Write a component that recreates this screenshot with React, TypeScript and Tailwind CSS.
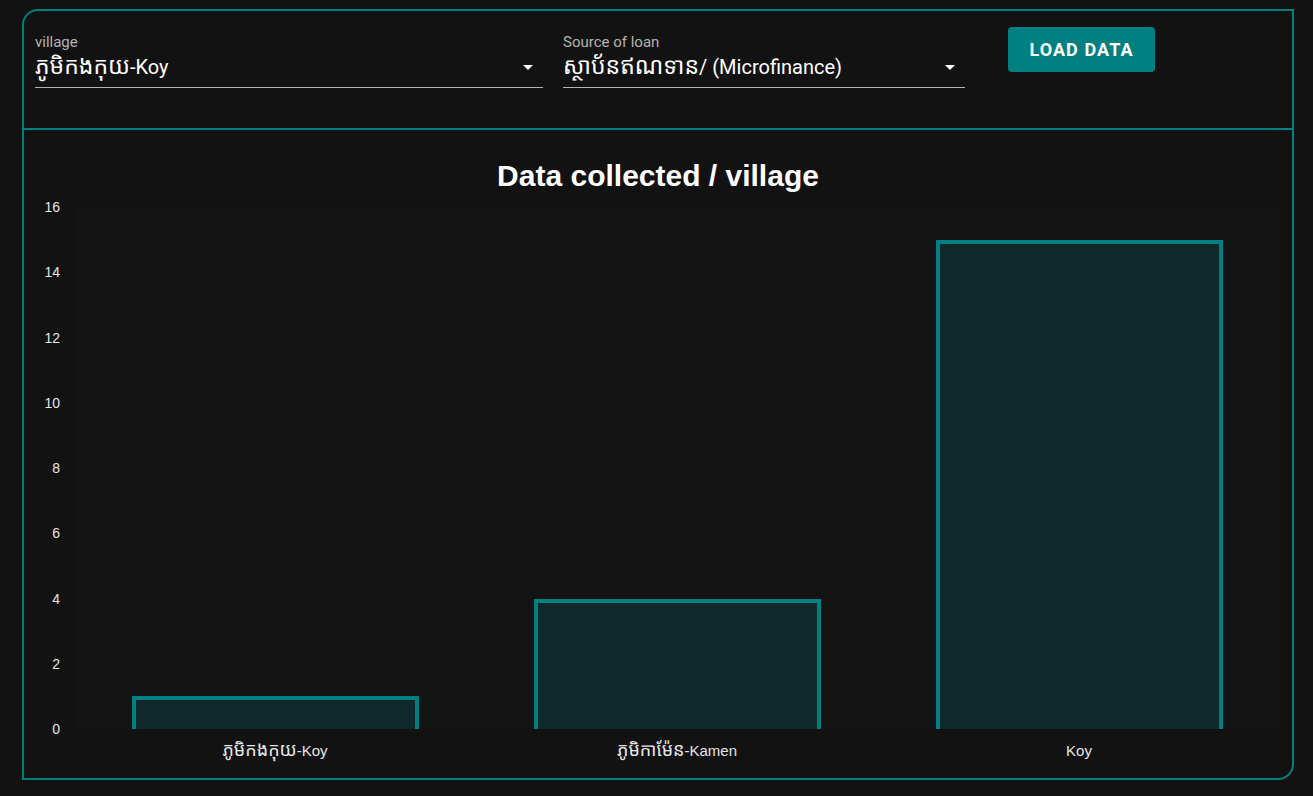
import React from "react";

interface Village {
  khmer: string;
  latin: string;
  count: number;
}

const villages: Village[] = [
  { khmer: "ភូមិកងកុយ", latin: "-Koy", count: 1 },
  { khmer: "ភូមិកាម៉ែន", latin: "-Kamen", count: 4 },
  { khmer: "", latin: "Koy", count: 15 },
];

const ticks = [16, 14, 12, 10, 8, 6, 4, 2, 0];
const PLOT_H = 522;
const MAX = 16;

const uiFont = "font-['Roboto','Noto_Sans_Khmer','Khmer_OS','Noto_Sans',sans-serif]";
const chartFont = "font-['Liberation_Sans','Noto_Sans_Khmer','Khmer_OS',Arial,sans-serif]";

function SelectField({ label, khmer, latin, width }: { label: string; khmer: string; latin: string; width: string }) {
  return (
    <div className={`${width} mt-[6px] ${uiFont}`}>
      <p className="text-[15px] leading-[18px] text-[#b3b3b3]">{label}</p>
      <div className="mt-[4px] flex items-center justify-between border-b border-[#b3b3b3] pb-[8px]">
        <span className="text-[20px] leading-[24px] text-white">
          <span className="text-[23px]">{khmer}</span>
          {latin}
        </span>
        {/* flecha desplegable */}
        <svg width="10" height="5" viewBox="0 0 10 5" className="mr-[10px]">
          <path d="M0 0 L10 0 L5 5 Z" fill="#ffffff" />
        </svg>
      </div>
    </div>
  );
}

export default function App() {
  return (
    <div className="min-h-screen w-full bg-[#121212] pt-[9px] pl-[22px]">
      <div className="h-[771px] w-[1272px] rounded-tl-[16px] rounded-br-[16px] border-2 border-[#008080] bg-[#121212]">
        {/* FILTROS */}
        <header className="flex h-[119px] items-start border-b-2 border-[#008080] pt-[16px] pl-[11px]">
          <SelectField label="village" khmer="ភូមិកងកុយ" latin="-Koy" width="w-[508px]" />
          <div className="w-[20px]" />
          <SelectField label="Source of loan" khmer="ស្ថាប័នឥណទាន" latin="/ (Microfinance)" width="w-[402px]" />
          <button
            className={`ml-[43px] h-[45px] w-[147px] rounded-[4px] bg-[#008080] text-[18px] font-bold tracking-[0.06em] text-white ${uiFont}`}
          >
            LOAD DATA
          </button>
        </header>

        {/* GRAFICO */}
        <section className={chartFont}>
          <h1 className="mt-[30px] text-center text-[30px] font-bold leading-[32px] text-white">
            Data collected / village
          </h1>

          <div className="mt-[7px] flex">
            <div className="flex h-[538px] w-[36px] flex-col justify-between text-right text-[14px] leading-[16px] text-[#e6e6e6]">
              {ticks.map((t) => (
                <span key={t}>{t}</span>
              ))}
            </div>

            <div className="ml-[14px] w-[1206px] pt-[8px]">
              <div className="flex h-[522px] bg-[#141414]">
                {villages.map((v) => (
                  <div key={v.latin + v.khmer} className="flex flex-1 items-end justify-center">
                    <div
                      className="w-[287px] border-4 border-b-0 border-[#008080] bg-[#0f292a]"
                      style={{ height: `${(v.count / MAX) * PLOT_H}px` }}
                    />
                  </div>
                ))}
              </div>
              <div className="mt-[12px] flex text-[15px] leading-[18px] text-[#e6e6e6]">
                {villages.map((v) => (
                  <div key={v.latin + v.khmer} className="flex-1 text-center">
                    <span className="text-[18px]">{v.khmer}</span>
                    {v.latin}
                  </div>
                ))}
              </div>
            </div>
          </div>
        </section>
      </div>
    </div>
  );
}
